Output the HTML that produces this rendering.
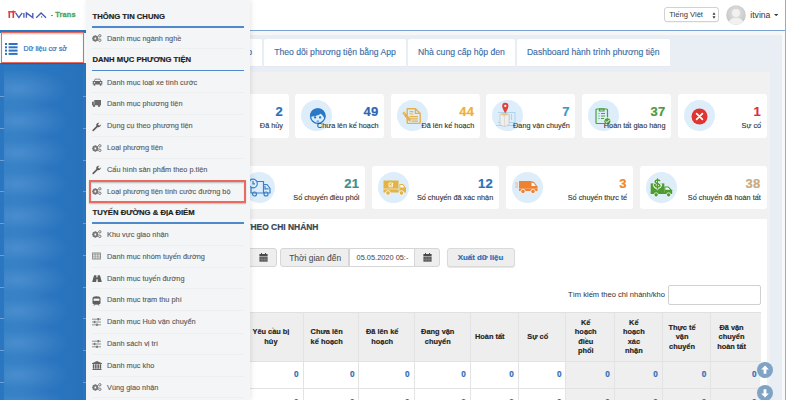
<!DOCTYPE html>
<html><head><meta charset="utf-8"><style>
html,body{margin:0;padding:0;}
body{width:786px;height:400px;overflow:hidden;position:relative;background:#fff;font-family:"Liberation Sans", sans-serif;}
</style></head><body>
<div style="position:absolute;left:86px;top:0px;width:700px;height:30px;background:#fff;"></div><div style="position:absolute;left:86px;top:29.5px;width:699px;height:1px;background:#7aa3d4;"></div><div style="position:absolute;left:86px;top:30.5px;width:699px;height:5px;background:#f6f6f7;"></div><div style="position:absolute;left:86px;top:35px;width:696.4px;height:365px;background:#e9eef4;"></div><div style="position:absolute;left:782.4px;top:30.5px;width:2.6px;height:370px;background:#f7f8fa;"></div><div style="position:absolute;left:785px;top:0px;width:1px;height:400px;background:#a8a8a8;"></div><div style="position:absolute;left:664.4px;top:7.3px;width:54.3px;height:14.8px;background:#fff;border:1px solid #d2d2d2;border-radius:3px;box-sizing:border-box;box-shadow:0 0.5px 0.5px rgba(0,0,0,0.08);"></div><div style="position:absolute;top:10.24px;font-size:7.6px;line-height:9.12px;color:#404040;white-space:nowrap;left:669.20px;-webkit-text-stroke:0.03px currentColor;">Tiếng Việt</div><svg style="position:absolute;left:711.9px;top:11.5px" width="4" height="7" viewBox="0 0 4 7"><path d="M2 0.3 L3.5 2.8 H0.5Z M2 6.7 L3.5 4.2 H0.5Z" fill="#3a3a3a"/></svg><svg style="position:absolute;left:725.5px;top:5px" width="20" height="20" viewBox="0 0 20 20"><defs><radialGradient id="av" cx="50%" cy="40%" r="60%"><stop offset="0" stop-color="#e6e6e6"/><stop offset="1" stop-color="#c4c4c4"/></radialGradient><clipPath id="avc"><circle cx="10" cy="10" r="9.8"/></clipPath></defs><circle cx="10" cy="10" r="9.8" fill="url(#av)"/><g clip-path="url(#avc)" fill="#f1f1f1"><circle cx="10" cy="8" r="4"/><path d="M2.5 20 C2.5 14.8 5.5 12.8 10 12.8 C14.5 12.8 17.5 14.8 17.5 20Z"/></g></svg><div style="position:absolute;top:9.84px;font-size:8.6px;line-height:10.319999999999999px;color:#3a3a3a;white-space:nowrap;left:750.30px;-webkit-text-stroke:0.05px currentColor;">itvina</div><svg style="position:absolute;left:773.8px;top:13.9px" width="4.4" height="2.4" viewBox="0 0 4.4 2.4"><path d="M0 0H4.4L2.2 2.2Z" fill="#3a3a3a"/></svg><div style="position:absolute;left:100px;top:39.4px;width:162.2px;height:26.3px;background:#fff;border-radius:2px 2px 0 0;box-shadow:0 0.6px 0 #dde3ea;"></div><div style="position:absolute;top:47.21px;font-size:8.65px;line-height:10.38px;color:#3a6ca6;white-space:nowrap;-webkit-text-stroke:0.12px currentColor;right:533.90px;text-align:right;">Báo cáo</div><div style="position:absolute;left:263.8px;top:39.4px;width:142.39999999999998px;height:26.3px;background:#fff;border-radius:2px 2px 0 0;box-shadow:0 0.6px 0 #dde3ea;"></div><div style="position:absolute;top:47.21px;font-size:8.65px;line-height:10.38px;color:#3a6ca6;white-space:nowrap;-webkit-text-stroke:0.12px currentColor;left:235.00px;width:200px;text-align:center;">Theo dõi phương tiện bằng App</div><div style="position:absolute;left:408px;top:39.4px;width:107px;height:26.3px;background:#fff;border-radius:2px 2px 0 0;box-shadow:0 0.6px 0 #dde3ea;"></div><div style="position:absolute;top:47.21px;font-size:8.65px;line-height:10.38px;color:#3a6ca6;white-space:nowrap;-webkit-text-stroke:0.12px currentColor;left:361.50px;width:200px;text-align:center;">Nhà cung cấp hộp đen</div><div style="position:absolute;left:516.8px;top:39.4px;width:152.9000000000001px;height:26.3px;background:#fff;border-radius:2px 2px 0 0;box-shadow:0 0.6px 0 #dde3ea;"></div><div style="position:absolute;top:47.21px;font-size:8.65px;line-height:10.38px;color:#3a6ca6;white-space:nowrap;-webkit-text-stroke:0.12px currentColor;left:493.25px;width:200px;text-align:center;">Dashboard hành trình phương tiện</div><div style="position:absolute;left:100.5px;top:71.6px;width:669.8px;height:330px;background:#f1f1f1;"></div><div style="position:absolute;left:103.95px;top:94px;width:89px;height:43.5px;background:#fff;border-radius:3px;"></div><div style="position:absolute;left:109.95px;top:100.3px;width:31px;height:31px;background:#ddedfa;border-radius:50%;"></div><div style="position:absolute;left:199.57px;top:94px;width:89px;height:43.5px;background:#fff;border-radius:3px;"></div><div style="position:absolute;left:205.57px;top:100.3px;width:31px;height:31px;background:#ddedfa;border-radius:50%;"></div><div style="position:absolute;top:104.40px;font-size:13px;line-height:15.6px;color:#2a6fb5;white-space:nowrap;font-weight:bold;-webkit-text-stroke:0.2px currentColor;right:503.03px;text-align:right;letter-spacing:0.3px;">2</div><div style="position:absolute;top:121.52px;font-size:7.3px;line-height:8.76px;color:#333;white-space:nowrap;-webkit-text-stroke:0.12px currentColor;right:503.03px;text-align:right;">Đã hủy</div><div style="position:absolute;left:295.2px;top:94px;width:89px;height:43.5px;background:#fff;border-radius:3px;"></div><div style="position:absolute;left:301.2px;top:100.3px;width:31px;height:31px;background:#ddedfa;border-radius:50%;"></div><svg style="position:absolute;left:308.5px;top:107.8px" width="18" height="17" viewBox="0 0 18 17"><circle cx="8.8" cy="8.1" r="7.3" fill="none" stroke="#2b78c6" stroke-width="1.35"/><path d="M1.3 8.8 C1 3 4.8 0.6 8.8 0.6 C12.8 0.6 16.6 3 16.3 9.2 L15.2 10.4 C14.4 8.2 13 6.6 11.6 5.8 C10 7.2 6.5 8.2 2.6 8.6 Z" fill="#2b78c6"/><circle cx="6.1" cy="9.4" r="1.15" fill="#2b78c6"/><circle cx="11.1" cy="9.4" r="1.15" fill="#2b78c6"/><rect x="7.7" y="12.6" width="2.2" height="1" fill="#2b78c6"/></svg><div style="position:absolute;top:104.40px;font-size:13px;line-height:15.6px;color:#2c68ae;white-space:nowrap;font-weight:bold;-webkit-text-stroke:0.2px currentColor;right:407.40px;text-align:right;letter-spacing:0.3px;">49</div><div style="position:absolute;top:121.52px;font-size:7.3px;line-height:8.76px;color:#333;white-space:nowrap;-webkit-text-stroke:0.12px currentColor;right:407.40px;text-align:right;">Chưa lên kế hoạch</div><div style="position:absolute;left:390.82px;top:94px;width:89px;height:43.5px;background:#fff;border-radius:3px;"></div><div style="position:absolute;left:396.82px;top:100.3px;width:31px;height:31px;background:#ddedfa;border-radius:50%;"></div><svg style="position:absolute;left:401.32px;top:107.3px" width="22" height="18" viewBox="0 0 22 18"><g fill="none" stroke="#e3b050" stroke-width="1.4" stroke-linejoin="round"><path d="M6.2 1.8 H14.4 L19.2 6.4 V15.4 Q19.2 16.4 18.2 16.4 H7.2 Q6.2 16.4 6.2 15.4 Z"/><path d="M14.4 1.8 V6.4 H19.2"/></g><g stroke="#e3b050" stroke-width="1.1"><path d="M8.6 4.6 H12.2 M8.6 7 H12.2 M8.6 9.6 H17 M8.6 11.9 H17 M10.5 14.1 H17"/></g><path d="M1.3 6.2 L3.2 4.6 L9.2 11.6 L9.8 14.8 L7 13.4 Z" fill="#e3b050"/><path d="M2.6 7.6 L4.2 6.1" stroke="#fff" stroke-width="0.5"/></svg><div style="position:absolute;top:104.40px;font-size:13px;line-height:15.6px;color:#f0b12e;white-space:nowrap;font-weight:bold;-webkit-text-stroke:0.2px currentColor;right:311.78px;text-align:right;letter-spacing:0.3px;">44</div><div style="position:absolute;top:121.52px;font-size:7.3px;line-height:8.76px;color:#333;white-space:nowrap;-webkit-text-stroke:0.12px currentColor;right:311.78px;text-align:right;">Đã lên kế hoạch</div><div style="position:absolute;left:486.45px;top:94px;width:89px;height:43.5px;background:#fff;border-radius:3px;"></div><div style="position:absolute;left:492.45px;top:100.3px;width:31px;height:31px;background:#ddedfa;border-radius:50%;"></div><svg style="position:absolute;left:494.45px;top:101.3px" width="26" height="28" viewBox="0 0 26 28"><g fill="none" stroke="#a9d3ea" stroke-width="0.9"><path d="M4 11.5 H21 V21.5 H4"/><path d="M15 13 V19 M17.5 13 V19"/><path d="M2 24.5 H22"/></g><path d="M6 13.5 L10.5 12 L15 13.5 V24 L10.5 25.5 L6 24Z" fill="#eeeeee" stroke="#bdbdbd" stroke-width="0.6"/><path d="M6 13.5 L10.5 12 L15 13.5 L10.5 15Z" fill="#e6c88a"/><path d="M10.5 15 V25.5" stroke="#c8c8c8" stroke-width="0.5"/><path d="M11.3 12.2 C8.6 7.6 8.2 6.2 8.2 4.9 A3.1 3.1 0 0 1 14.4 4.9 C14.4 6.2 14 7.6 11.3 12.2Z" fill="#e2403a"/><circle cx="11.3" cy="4.9" r="1.1" fill="#fff"/></svg><div style="position:absolute;top:104.40px;font-size:13px;line-height:15.6px;color:#3d98c6;white-space:nowrap;font-weight:bold;-webkit-text-stroke:0.2px currentColor;right:216.15px;text-align:right;letter-spacing:0.3px;">7</div><div style="position:absolute;top:121.52px;font-size:7.3px;line-height:8.76px;color:#333;white-space:nowrap;-webkit-text-stroke:0.12px currentColor;right:216.15px;text-align:right;">Đang vận chuyển</div><div style="position:absolute;left:582.08px;top:94px;width:89px;height:43.5px;background:#fff;border-radius:3px;"></div><div style="position:absolute;left:588.08px;top:100.3px;width:31px;height:31px;background:#ddedfa;border-radius:50%;"></div><svg style="position:absolute;left:595.08px;top:106.8px" width="18" height="18" viewBox="0 0 18 18"><g fill="none" stroke="#4aa23e" stroke-width="1.2"><rect x="1" y="2" width="11.5" height="14.5" rx="1"/><path d="M4.5 4 V1.8 H9 V4Z"/><path d="M3.5 6.5 H4.5 M6 6.5 H10 M3.5 9 H4.5 M6 9 H10 M3.5 11.5 H4.5 M6 11.5 H9"/></g><circle cx="12.4" cy="14.3" r="3.6" fill="#4aa23e" stroke="#fff" stroke-width="0.8"/><path d="M10.6 14.3 L12 15.6 L14.3 13" fill="none" stroke="#fff" stroke-width="1"/></svg><div style="position:absolute;top:104.40px;font-size:13px;line-height:15.6px;color:#4c9a3c;white-space:nowrap;font-weight:bold;-webkit-text-stroke:0.2px currentColor;right:120.52px;text-align:right;letter-spacing:0.3px;">37</div><div style="position:absolute;top:121.52px;font-size:7.3px;line-height:8.76px;color:#333;white-space:nowrap;-webkit-text-stroke:0.12px currentColor;right:120.52px;text-align:right;">Hoàn tất giao hàng</div><div style="position:absolute;left:677.7px;top:94px;width:89px;height:43.5px;background:#fff;border-radius:3px;"></div><div style="position:absolute;left:683.7px;top:100.3px;width:31px;height:31px;background:#ddedfa;border-radius:50%;"></div><svg style="position:absolute;left:691.2px;top:108.0px" width="17" height="17" viewBox="0 0 17 17"><circle cx="8.5" cy="8.5" r="8" fill="#e1342f"/><path d="M5.6 5.6 L11.4 11.4 M11.4 5.6 L5.6 11.4" stroke="#fff" stroke-width="1.7" stroke-linecap="round"/></svg><div style="position:absolute;top:104.40px;font-size:13px;line-height:15.6px;color:#d8323c;white-space:nowrap;font-weight:bold;-webkit-text-stroke:0.2px currentColor;right:24.90px;text-align:right;letter-spacing:0.3px;">1</div><div style="position:absolute;top:121.52px;font-size:7.3px;line-height:8.76px;color:#333;white-space:nowrap;-webkit-text-stroke:0.12px currentColor;right:24.90px;text-align:right;">Sự cố</div><div style="position:absolute;left:104.5px;top:166px;width:127.0px;height:42.5px;background:#fff;border-radius:3px;"></div><div style="position:absolute;left:110.5px;top:171.8px;width:31px;height:31px;background:#ddedfa;border-radius:50%;"></div><div style="position:absolute;left:238.3px;top:166px;width:127.0px;height:42.5px;background:#fff;border-radius:3px;"></div><div style="position:absolute;left:244.3px;top:171.8px;width:31px;height:31px;background:#ddedfa;border-radius:50%;"></div><svg style="position:absolute;left:247.8px;top:177.8px" width="24" height="20" viewBox="0 0 24 20"><g fill="none" stroke="#3a82c8" stroke-width="1.2"><circle cx="5" cy="5.5" r="4.3"/><path d="M5 3 V5.8 H7"/><path d="M9 3.5 H15.5 V15 H3 V9.8"/><path d="M15.5 6.5 H19 L22 10.5 V15 H15.5"/><path d="M17 7.8 V10.8 H20.5"/><circle cx="6.5" cy="16" r="2"/><circle cx="18" cy="16" r="2"/></g></svg><div style="position:absolute;top:175.80px;font-size:13px;line-height:15.6px;color:#3c8e88;white-space:nowrap;font-weight:bold;-webkit-text-stroke:0.2px currentColor;right:426.80px;text-align:right;letter-spacing:0.3px;">21</div><div style="position:absolute;top:193.92px;font-size:7.3px;line-height:8.76px;color:#333;white-space:nowrap;-webkit-text-stroke:0.12px currentColor;right:426.60px;text-align:right;">Số chuyến điều phối</div><div style="position:absolute;left:372.1px;top:166px;width:127.0px;height:42.5px;background:#fff;border-radius:3px;"></div><div style="position:absolute;left:378.1px;top:171.8px;width:31px;height:31px;background:#ddedfa;border-radius:50%;"></div><svg style="position:absolute;left:382.6px;top:180.3px" width="24" height="16" viewBox="0 0 24 16"><path d="M0.5 0.5 H15.5 V12 H0.5Z" fill="#e2b345"/><path d="M16.5 4 H20 L23 8 V12 H16.5Z" fill="#e2b345"/><path d="M17.3 5 H19.5 L21.3 7.6 H17.3Z" fill="#fff"/><rect x="0.5" y="11.5" width="22.5" height="1" fill="#e2b345"/><circle cx="5" cy="13" r="2.3" fill="#e2b345" stroke="#fff" stroke-width="0.8"/><circle cx="18.5" cy="13" r="2.3" fill="#e2b345" stroke="#fff" stroke-width="0.8"/><path d="M6 3 H9.5 V6.8 H6Z" fill="none" stroke="#fff" stroke-width="0.8"/><path d="M6.8 4.8 L7.8 5.8 L10 3" fill="none" stroke="#fff" stroke-width="0.8"/><path d="M0.5 9 H15.5" stroke="#fff" stroke-width="0.6"/></svg><div style="position:absolute;top:175.80px;font-size:13px;line-height:15.6px;color:#2a72b8;white-space:nowrap;font-weight:bold;-webkit-text-stroke:0.2px currentColor;right:293.00px;text-align:right;letter-spacing:0.3px;">12</div><div style="position:absolute;top:193.92px;font-size:7.3px;line-height:8.76px;color:#333;white-space:nowrap;-webkit-text-stroke:0.12px currentColor;right:292.80px;text-align:right;">Số chuyến đã xác nhận</div><div style="position:absolute;left:505.9px;top:166px;width:127.0px;height:42.5px;background:#fff;border-radius:3px;"></div><div style="position:absolute;left:511.9px;top:171.8px;width:31px;height:31px;background:#ddedfa;border-radius:50%;"></div><svg style="position:absolute;left:514.9px;top:180.3px" width="24" height="15" viewBox="0 0 24 15"><path d="M4 1 H15.5 L19 2 L22.5 6.5 V11 H4Z" fill="#ef8232"/><path d="M16.5 2.8 L18.5 3 L20.8 6 H16.5Z" fill="#fff"/><circle cx="8" cy="11.5" r="2.2" fill="#ef8232" stroke="#fff" stroke-width="0.8"/><circle cx="18" cy="11.5" r="2.2" fill="#ef8232" stroke="#fff" stroke-width="0.8"/><path d="M0 3 H3 M0.5 5 H3 M0 7 H3" stroke="#f3a66a" stroke-width="0.8"/><path d="M4 8.5 H22.5" stroke="#f6b584" stroke-width="0.5"/></svg><div style="position:absolute;top:175.80px;font-size:13px;line-height:15.6px;color:#f0862e;white-space:nowrap;font-weight:bold;-webkit-text-stroke:0.2px currentColor;right:159.20px;text-align:right;letter-spacing:0.3px;">3</div><div style="position:absolute;top:193.92px;font-size:7.3px;line-height:8.76px;color:#333;white-space:nowrap;-webkit-text-stroke:0.12px currentColor;right:159.00px;text-align:right;">Số chuyến thực tế</div><div style="position:absolute;left:639.7px;top:166px;width:127.0px;height:42.5px;background:#fff;border-radius:3px;"></div><div style="position:absolute;left:645.7px;top:171.8px;width:31px;height:31px;background:#ddedfa;border-radius:50%;"></div><svg style="position:absolute;left:649.9px;top:178.3px" width="24" height="20" viewBox="0 0 24 20"><rect x="0.7" y="5.4" width="13.6" height="9.8" fill="#4d9c2f"/><path d="M14.3 8.4 H18.5 L22.1 12.2 V15.8 H14.3Z" fill="#4d9c2f"/><path d="M15.4 9.4 H18 L20.2 11.8 H15.4Z" fill="#fff"/><rect x="0.7" y="14.6" width="21.4" height="1.4" fill="#4d9c2f"/><circle cx="6.1" cy="16.8" r="2.1" fill="#4d9c2f" stroke="#fff" stroke-width="0.7"/><circle cx="18.6" cy="16.8" r="2.1" fill="#4d9c2f" stroke="#fff" stroke-width="0.7"/><path d="M3.4 5.4 V8 L7.5 11.8 L11.6 8 V5.4" fill="none" stroke="#fff" stroke-width="0.8"/><g fill="none" stroke="#fff"><path d="M9.9 3.2 C9.9 1.6 5.1 1.6 5.1 3.7 C5.1 5.7 10 5.3 10 7.4 C10 9.4 5.1 9.4 5 7.8" stroke-width="3"/></g><g fill="none" stroke="#4d9c2f"><path d="M9.9 3.2 C9.9 1.6 5.1 1.6 5.1 3.7 C5.1 5.7 10 5.3 10 7.4 C10 9.4 5.1 9.4 5 7.8" stroke-width="1.5"/><path d="M7.5 0.3 V10.6" stroke-width="1.2"/></g></svg><div style="position:absolute;top:175.80px;font-size:13px;line-height:15.6px;color:#c9aa7c;white-space:nowrap;font-weight:bold;-webkit-text-stroke:0.2px currentColor;right:25.40px;text-align:right;letter-spacing:0.3px;">38</div><div style="position:absolute;top:193.92px;font-size:7.3px;line-height:8.76px;color:#333;white-space:nowrap;-webkit-text-stroke:0.12px currentColor;right:25.20px;text-align:right;">Số chuyến đã hoàn tất</div><div style="position:absolute;left:100.5px;top:219px;width:666.4px;height:190px;background:#fff;"></div><div style="position:absolute;top:222.23px;font-size:8.45px;line-height:10.139999999999999px;color:#3a4553;white-space:nowrap;font-weight:bold;-webkit-text-stroke:0.2px currentColor;right:467.60px;text-align:right;">THỐNG KÊ THEO CHI NHÁNH</div><div style="position:absolute;left:230px;top:248.3px;width:46.5px;height:19.2px;background:#eeeeee;border:1px solid #d6d6d6;border-radius:0 3px 3px 0;box-sizing:border-box;"></div><svg style="position:absolute;left:259px;top:253.3px" width="9" height="9" viewBox="0 0 9 9"><rect x="0.4" y="1" width="8.2" height="2.4" fill="#4a4a4a"/><rect x="0.4" y="3.9" width="8.2" height="4.8" fill="#5a5a5a"/><path d="M0.4 6.3 H8.6 M3.1 3.9 V8.7 M5.9 3.9 V8.7" stroke="#9a9a9a" stroke-width="0.45"/><rect x="2" y="0" width="1" height="1.6" fill="#4a4a4a"/><rect x="6" y="0" width="1" height="1.6" fill="#4a4a4a"/></svg><div style="position:absolute;left:280.4px;top:248.3px;width:68.5px;height:19.2px;background:#eeeeee;border:1px solid #d6d6d6;border-radius:3px 0 0 3px;box-sizing:border-box;"></div><div style="position:absolute;top:252.93px;font-size:8.45px;line-height:10.139999999999999px;color:#4a4a4a;white-space:nowrap;left:289.20px;-webkit-text-stroke:0.05px currentColor;">Thời gian đến</div><div style="position:absolute;left:348.6px;top:248.3px;width:66px;height:19.2px;background:#fff;border:1px solid #d6d6d6;box-sizing:border-box;"></div><div style="position:absolute;top:253.56px;font-size:7.4px;line-height:8.88px;color:#4a4a4a;white-space:nowrap;left:356.60px;-webkit-text-stroke:0.05px currentColor;">05.05.2020 05:-</div><div style="position:absolute;left:414.4px;top:248.3px;width:25.2px;height:19.2px;background:#eeeeee;border:1px solid #d6d6d6;border-radius:0 3px 3px 0;box-sizing:border-box;"></div><svg style="position:absolute;left:422.7px;top:253.3px" width="9" height="9" viewBox="0 0 9 9"><rect x="0.4" y="1" width="8.2" height="2.4" fill="#4a4a4a"/><rect x="0.4" y="3.9" width="8.2" height="4.8" fill="#5a5a5a"/><path d="M0.4 6.3 H8.6 M3.1 3.9 V8.7 M5.9 3.9 V8.7" stroke="#9a9a9a" stroke-width="0.45"/><rect x="2" y="0" width="1" height="1.6" fill="#4a4a4a"/><rect x="6" y="0" width="1" height="1.6" fill="#4a4a4a"/></svg><div style="position:absolute;left:446.5px;top:248px;width:68px;height:19.2px;background:#eeeeee;border:1px solid #dadada;border-radius:3px;box-sizing:border-box;box-shadow:0 1px 1px rgba(0,0,0,0.1);"></div><div style="position:absolute;top:253.06px;font-size:7.9px;line-height:9.48px;color:#2f6fb8;white-space:nowrap;font-weight:bold;-webkit-text-stroke:0.2px currentColor;left:380.50px;width:200px;text-align:center;">Xuất dữ liệu</div><div style="position:absolute;top:290.07px;font-size:7.55px;line-height:9.059999999999999px;color:#333;white-space:nowrap;right:121.00px;text-align:right;-webkit-text-stroke:0.03px currentColor;">Tìm kiếm theo chi nhánh/kho</div><div style="position:absolute;left:668px;top:285.1px;width:92.6px;height:20.2px;background:#fff;border:1px solid #d0d0d0;border-radius:2px;box-sizing:border-box;"></div><div style="position:absolute;left:100.5px;top:312.1px;width:660px;height:48.7px;background:#eeeeee;"></div><div style="position:absolute;left:100.5px;top:312.1px;width:660px;height:0.8px;background:#e0e0e0;"></div><div style="position:absolute;left:100.5px;top:360.8px;width:660px;height:0.8px;background:#e2e2e2;"></div><div style="position:absolute;left:565.4px;top:361.6px;width:195.1px;height:40px;background:#efefef;"></div><div style="position:absolute;left:100.5px;top:388.3px;width:660px;height:0.8px;background:#e2e2e2;"></div><div style="position:absolute;left:302.5px;top:312.1px;width:0.9px;height:90px;background:#e3e3e3;"></div><div style="position:absolute;left:358.4px;top:312.1px;width:0.9px;height:90px;background:#e3e3e3;"></div><div style="position:absolute;left:413.5px;top:312.1px;width:0.9px;height:90px;background:#e3e3e3;"></div><div style="position:absolute;left:469.6px;top:312.1px;width:0.9px;height:90px;background:#e3e3e3;"></div><div style="position:absolute;left:517.6px;top:312.1px;width:0.9px;height:90px;background:#e3e3e3;"></div><div style="position:absolute;left:565.4px;top:312.1px;width:0.9px;height:90px;background:#e3e3e3;"></div><div style="position:absolute;left:613.7px;top:312.1px;width:0.9px;height:90px;background:#e3e3e3;"></div><div style="position:absolute;left:661.6px;top:312.1px;width:0.9px;height:90px;background:#e3e3e3;"></div><div style="position:absolute;left:710.1px;top:312.1px;width:0.9px;height:90px;background:#e3e3e3;"></div><div style="position:absolute;top:328.46px;font-size:7.4px;line-height:8.88px;color:#222;white-space:nowrap;font-weight:bold;left:170.95px;width:200px;text-align:center;-webkit-text-stroke:0.15px currentColor;">Yêu cầu bị</div><div style="position:absolute;top:337.86px;font-size:7.4px;line-height:8.88px;color:#222;white-space:nowrap;font-weight:bold;left:170.95px;width:200px;text-align:center;-webkit-text-stroke:0.15px currentColor;">hủy</div><div style="position:absolute;top:369.68px;font-size:8.2px;line-height:9.839999999999998px;color:#2f6fb8;white-space:nowrap;font-weight:bold;-webkit-text-stroke:0.2px currentColor;right:487.40px;text-align:right;">0</div><div style="position:absolute;top:397.88px;font-size:8.2px;line-height:9.839999999999998px;color:#2f6fb8;white-space:nowrap;font-weight:bold;-webkit-text-stroke:0.2px currentColor;right:487.40px;text-align:right;">0</div><div style="position:absolute;top:328.46px;font-size:7.4px;line-height:8.88px;color:#222;white-space:nowrap;font-weight:bold;left:226.65px;width:200px;text-align:center;-webkit-text-stroke:0.15px currentColor;">Chưa lên</div><div style="position:absolute;top:337.86px;font-size:7.4px;line-height:8.88px;color:#222;white-space:nowrap;font-weight:bold;left:226.65px;width:200px;text-align:center;-webkit-text-stroke:0.15px currentColor;">kế hoạch</div><div style="position:absolute;top:369.68px;font-size:8.2px;line-height:9.839999999999998px;color:#2f6fb8;white-space:nowrap;font-weight:bold;-webkit-text-stroke:0.2px currentColor;right:431.50px;text-align:right;">0</div><div style="position:absolute;top:397.88px;font-size:8.2px;line-height:9.839999999999998px;color:#2f6fb8;white-space:nowrap;font-weight:bold;-webkit-text-stroke:0.2px currentColor;right:431.50px;text-align:right;">0</div><div style="position:absolute;top:328.46px;font-size:7.4px;line-height:8.88px;color:#222;white-space:nowrap;font-weight:bold;left:282.15px;width:200px;text-align:center;-webkit-text-stroke:0.15px currentColor;">Đã lên kế</div><div style="position:absolute;top:337.86px;font-size:7.4px;line-height:8.88px;color:#222;white-space:nowrap;font-weight:bold;left:282.15px;width:200px;text-align:center;-webkit-text-stroke:0.15px currentColor;">hoạch</div><div style="position:absolute;top:369.68px;font-size:8.2px;line-height:9.839999999999998px;color:#2f6fb8;white-space:nowrap;font-weight:bold;-webkit-text-stroke:0.2px currentColor;right:376.40px;text-align:right;">0</div><div style="position:absolute;top:397.88px;font-size:8.2px;line-height:9.839999999999998px;color:#2f6fb8;white-space:nowrap;font-weight:bold;-webkit-text-stroke:0.2px currentColor;right:376.40px;text-align:right;">0</div><div style="position:absolute;top:328.46px;font-size:7.4px;line-height:8.88px;color:#222;white-space:nowrap;font-weight:bold;left:337.75px;width:200px;text-align:center;-webkit-text-stroke:0.15px currentColor;">Đang vận</div><div style="position:absolute;top:337.86px;font-size:7.4px;line-height:8.88px;color:#222;white-space:nowrap;font-weight:bold;left:337.75px;width:200px;text-align:center;-webkit-text-stroke:0.15px currentColor;">chuyển</div><div style="position:absolute;top:369.68px;font-size:8.2px;line-height:9.839999999999998px;color:#2f6fb8;white-space:nowrap;font-weight:bold;-webkit-text-stroke:0.2px currentColor;right:320.30px;text-align:right;">0</div><div style="position:absolute;top:397.88px;font-size:8.2px;line-height:9.839999999999998px;color:#2f6fb8;white-space:nowrap;font-weight:bold;-webkit-text-stroke:0.2px currentColor;right:320.30px;text-align:right;">0</div><div style="position:absolute;top:333.16px;font-size:7.4px;line-height:8.88px;color:#222;white-space:nowrap;font-weight:bold;left:389.80px;width:200px;text-align:center;-webkit-text-stroke:0.15px currentColor;">Hoàn tất</div><div style="position:absolute;top:369.68px;font-size:8.2px;line-height:9.839999999999998px;color:#2f6fb8;white-space:nowrap;font-weight:bold;-webkit-text-stroke:0.2px currentColor;right:272.30px;text-align:right;">0</div><div style="position:absolute;top:397.88px;font-size:8.2px;line-height:9.839999999999998px;color:#2f6fb8;white-space:nowrap;font-weight:bold;-webkit-text-stroke:0.2px currentColor;right:272.30px;text-align:right;">0</div><div style="position:absolute;top:333.16px;font-size:7.4px;line-height:8.88px;color:#222;white-space:nowrap;font-weight:bold;left:437.70px;width:200px;text-align:center;-webkit-text-stroke:0.15px currentColor;">Sự cố</div><div style="position:absolute;top:369.68px;font-size:8.2px;line-height:9.839999999999998px;color:#2f6fb8;white-space:nowrap;font-weight:bold;-webkit-text-stroke:0.2px currentColor;right:224.50px;text-align:right;">0</div><div style="position:absolute;top:397.88px;font-size:8.2px;line-height:9.839999999999998px;color:#2f6fb8;white-space:nowrap;font-weight:bold;-webkit-text-stroke:0.2px currentColor;right:224.50px;text-align:right;">0</div><div style="position:absolute;top:319.06px;font-size:7.4px;line-height:8.88px;color:#222;white-space:nowrap;font-weight:bold;left:485.75px;width:200px;text-align:center;-webkit-text-stroke:0.15px currentColor;">Kế</div><div style="position:absolute;top:328.46px;font-size:7.4px;line-height:8.88px;color:#222;white-space:nowrap;font-weight:bold;left:485.75px;width:200px;text-align:center;-webkit-text-stroke:0.15px currentColor;">hoạch</div><div style="position:absolute;top:337.86px;font-size:7.4px;line-height:8.88px;color:#222;white-space:nowrap;font-weight:bold;left:485.75px;width:200px;text-align:center;-webkit-text-stroke:0.15px currentColor;">điều</div><div style="position:absolute;top:347.26px;font-size:7.4px;line-height:8.88px;color:#222;white-space:nowrap;font-weight:bold;left:485.75px;width:200px;text-align:center;-webkit-text-stroke:0.15px currentColor;">phối</div><div style="position:absolute;top:369.68px;font-size:8.2px;line-height:9.839999999999998px;color:#2f6fb8;white-space:nowrap;font-weight:bold;-webkit-text-stroke:0.2px currentColor;right:176.20px;text-align:right;">0</div><div style="position:absolute;top:397.88px;font-size:8.2px;line-height:9.839999999999998px;color:#2f6fb8;white-space:nowrap;font-weight:bold;-webkit-text-stroke:0.2px currentColor;right:176.20px;text-align:right;">0</div><div style="position:absolute;top:319.06px;font-size:7.4px;line-height:8.88px;color:#222;white-space:nowrap;font-weight:bold;left:533.85px;width:200px;text-align:center;-webkit-text-stroke:0.15px currentColor;">Kế</div><div style="position:absolute;top:328.46px;font-size:7.4px;line-height:8.88px;color:#222;white-space:nowrap;font-weight:bold;left:533.85px;width:200px;text-align:center;-webkit-text-stroke:0.15px currentColor;">hoạch</div><div style="position:absolute;top:337.86px;font-size:7.4px;line-height:8.88px;color:#222;white-space:nowrap;font-weight:bold;left:533.85px;width:200px;text-align:center;-webkit-text-stroke:0.15px currentColor;">xác</div><div style="position:absolute;top:347.26px;font-size:7.4px;line-height:8.88px;color:#222;white-space:nowrap;font-weight:bold;left:533.85px;width:200px;text-align:center;-webkit-text-stroke:0.15px currentColor;">nhận</div><div style="position:absolute;top:369.68px;font-size:8.2px;line-height:9.839999999999998px;color:#2f6fb8;white-space:nowrap;font-weight:bold;-webkit-text-stroke:0.2px currentColor;right:128.30px;text-align:right;">0</div><div style="position:absolute;top:397.88px;font-size:8.2px;line-height:9.839999999999998px;color:#2f6fb8;white-space:nowrap;font-weight:bold;-webkit-text-stroke:0.2px currentColor;right:128.30px;text-align:right;">0</div><div style="position:absolute;top:323.76px;font-size:7.4px;line-height:8.88px;color:#222;white-space:nowrap;font-weight:bold;left:582.05px;width:200px;text-align:center;-webkit-text-stroke:0.15px currentColor;">Thực tế</div><div style="position:absolute;top:333.16px;font-size:7.4px;line-height:8.88px;color:#222;white-space:nowrap;font-weight:bold;left:582.05px;width:200px;text-align:center;-webkit-text-stroke:0.15px currentColor;">vận</div><div style="position:absolute;top:342.56px;font-size:7.4px;line-height:8.88px;color:#222;white-space:nowrap;font-weight:bold;left:582.05px;width:200px;text-align:center;-webkit-text-stroke:0.15px currentColor;">chuyển</div><div style="position:absolute;top:369.68px;font-size:8.2px;line-height:9.839999999999998px;color:#2f6fb8;white-space:nowrap;font-weight:bold;-webkit-text-stroke:0.2px currentColor;right:79.80px;text-align:right;">0</div><div style="position:absolute;top:397.88px;font-size:8.2px;line-height:9.839999999999998px;color:#2f6fb8;white-space:nowrap;font-weight:bold;-webkit-text-stroke:0.2px currentColor;right:79.80px;text-align:right;">0</div><div style="position:absolute;top:323.76px;font-size:7.4px;line-height:8.88px;color:#222;white-space:nowrap;font-weight:bold;left:631.50px;width:200px;text-align:center;-webkit-text-stroke:0.15px currentColor;">Đã vận</div><div style="position:absolute;top:333.16px;font-size:7.4px;line-height:8.88px;color:#222;white-space:nowrap;font-weight:bold;left:631.50px;width:200px;text-align:center;-webkit-text-stroke:0.15px currentColor;">chuyển</div><div style="position:absolute;top:342.56px;font-size:7.4px;line-height:8.88px;color:#222;white-space:nowrap;font-weight:bold;left:631.50px;width:200px;text-align:center;-webkit-text-stroke:0.15px currentColor;">hoàn tất</div><div style="position:absolute;top:369.68px;font-size:8.2px;line-height:9.839999999999998px;color:#2f6fb8;white-space:nowrap;font-weight:bold;-webkit-text-stroke:0.2px currentColor;right:29.40px;text-align:right;">0</div><div style="position:absolute;top:397.88px;font-size:8.2px;line-height:9.839999999999998px;color:#2f6fb8;white-space:nowrap;font-weight:bold;-webkit-text-stroke:0.2px currentColor;right:29.40px;text-align:right;">0</div><svg style="position:absolute;left:755.6px;top:360.6px" width="18" height="18" viewBox="-9 -9 18 18"><circle r="8" fill="#7ea3c5"/><path d="M0 -4.6 L3.9 -0.4 H1.4 V3.8 H-1.4 V-0.4 H-3.9Z" fill="#fff"/></svg><svg style="position:absolute;left:755.6px;top:383.7px" width="18" height="18" viewBox="-9 -9 18 18"><circle r="8" fill="#7ea3c5"/><path d="M0 4.6 L3.9 0.4 H1.4 V-3.8 H-1.4 V0.4 H-3.9Z" fill="#fff"/></svg><div style="position:absolute;left:0px;top:0px;width:86px;height:30px;background:#fff;"></div><div style="position:absolute;left:0px;top:30px;width:86px;height:370px;background:#2a76c0;"></div><div style="position:absolute;left:4px;top:65px;width:79px;height:335px;overflow:hidden;background:linear-gradient(90deg,#2d7ac2,#2a75bf 60%,#2872bc);"><div style="position:absolute;left:-36px;top:4.00px;width:100px;height:40px;background:radial-gradient(ellipse 50% 50% at 50% 50%, rgba(125,178,228,0.36), rgba(125,178,228,0) 100%);"></div><div style="position:absolute;left:-36px;top:35.75px;width:100px;height:40px;background:radial-gradient(ellipse 50% 50% at 50% 50%, rgba(125,178,228,0.36), rgba(125,178,228,0) 100%);"></div><div style="position:absolute;left:-36px;top:67.50px;width:100px;height:40px;background:radial-gradient(ellipse 50% 50% at 50% 50%, rgba(125,178,228,0.36), rgba(125,178,228,0) 100%);"></div><div style="position:absolute;left:-36px;top:99.25px;width:100px;height:40px;background:radial-gradient(ellipse 50% 50% at 50% 50%, rgba(125,178,228,0.36), rgba(125,178,228,0) 100%);"></div><div style="position:absolute;left:-36px;top:131.00px;width:100px;height:40px;background:radial-gradient(ellipse 50% 50% at 50% 50%, rgba(125,178,228,0.36), rgba(125,178,228,0) 100%);"></div><div style="position:absolute;left:-36px;top:162.75px;width:100px;height:40px;background:radial-gradient(ellipse 50% 50% at 50% 50%, rgba(125,178,228,0.36), rgba(125,178,228,0) 100%);"></div><div style="position:absolute;left:-36px;top:194.50px;width:100px;height:40px;background:radial-gradient(ellipse 50% 50% at 50% 50%, rgba(125,178,228,0.36), rgba(125,178,228,0) 100%);"></div><div style="position:absolute;left:-36px;top:226.25px;width:100px;height:40px;background:radial-gradient(ellipse 50% 50% at 50% 50%, rgba(125,178,228,0.36), rgba(125,178,228,0) 100%);"></div><div style="position:absolute;left:-36px;top:258.00px;width:100px;height:40px;background:radial-gradient(ellipse 50% 50% at 50% 50%, rgba(125,178,228,0.36), rgba(125,178,228,0) 100%);"></div><div style="position:absolute;left:-36px;top:289.75px;width:100px;height:40px;background:radial-gradient(ellipse 50% 50% at 50% 50%, rgba(125,178,228,0.36), rgba(125,178,228,0) 100%);"></div><div style="position:absolute;left:-36px;top:321.50px;width:100px;height:40px;background:radial-gradient(ellipse 50% 50% at 50% 50%, rgba(125,178,228,0.36), rgba(125,178,228,0) 100%);"></div></div><div style="position:absolute;left:0px;top:96.0px;width:4px;height:0.8px;background:#6ba0d6;"></div><div style="position:absolute;left:83px;top:96.0px;width:3px;height:0.8px;background:#6ba0d6;"></div><div style="position:absolute;left:0px;top:127.75px;width:4px;height:0.8px;background:#6ba0d6;"></div><div style="position:absolute;left:83px;top:127.75px;width:3px;height:0.8px;background:#6ba0d6;"></div><div style="position:absolute;left:0px;top:159.5px;width:4px;height:0.8px;background:#6ba0d6;"></div><div style="position:absolute;left:83px;top:159.5px;width:3px;height:0.8px;background:#6ba0d6;"></div><div style="position:absolute;left:0px;top:191.25px;width:4px;height:0.8px;background:#6ba0d6;"></div><div style="position:absolute;left:83px;top:191.25px;width:3px;height:0.8px;background:#6ba0d6;"></div><div style="position:absolute;left:0px;top:223.0px;width:4px;height:0.8px;background:#6ba0d6;"></div><div style="position:absolute;left:83px;top:223.0px;width:3px;height:0.8px;background:#6ba0d6;"></div><div style="position:absolute;left:0px;top:254.75px;width:4px;height:0.8px;background:#6ba0d6;"></div><div style="position:absolute;left:83px;top:254.75px;width:3px;height:0.8px;background:#6ba0d6;"></div><div style="position:absolute;left:0px;top:286.5px;width:4px;height:0.8px;background:#6ba0d6;"></div><div style="position:absolute;left:83px;top:286.5px;width:3px;height:0.8px;background:#6ba0d6;"></div><div style="position:absolute;left:0px;top:318.25px;width:4px;height:0.8px;background:#6ba0d6;"></div><div style="position:absolute;left:83px;top:318.25px;width:3px;height:0.8px;background:#6ba0d6;"></div><div style="position:absolute;left:0px;top:350.0px;width:4px;height:0.8px;background:#6ba0d6;"></div><div style="position:absolute;left:83px;top:350.0px;width:3px;height:0.8px;background:#6ba0d6;"></div><div style="position:absolute;left:0px;top:381.75px;width:4px;height:0.8px;background:#6ba0d6;"></div><div style="position:absolute;left:83px;top:381.75px;width:3px;height:0.8px;background:#6ba0d6;"></div><div style="position:absolute;left:0px;top:33px;width:86px;height:30px;background:#fff;"></div><div style="position:absolute;left:0.9px;top:32.2px;width:83.3px;height:30.6px;border:1.8px solid #e96a5e;box-sizing:border-box;box-shadow:0 1.2px 1.2px rgba(0,0,0,0.22), inset 0 1.2px 1.2px rgba(0,0,0,0.2);"></div><svg style="position:absolute;left:4.8px;top:43px" width="13" height="12" viewBox="0 0 13 12"><g fill="#2f73bf"><rect x="0" y="0" width="2" height="2"/><rect x="3.6" y="0" width="9" height="2"/><rect x="0" y="3.3" width="2" height="2"/><rect x="3.6" y="3.3" width="9" height="2"/><rect x="0" y="6.6" width="2" height="2"/><rect x="3.6" y="6.6" width="9" height="2"/><rect x="0" y="9.9" width="2" height="2"/><rect x="3.6" y="9.9" width="9" height="2"/></g></svg><div style="position:absolute;top:45.11px;font-size:7.15px;line-height:8.58px;color:#3576c0;white-space:nowrap;left:23.50px;-webkit-text-stroke:0.22px currentColor;">Dữ liệu cơ sở</div><svg style="position:absolute;left:0;top:0" width="50" height="22" viewBox="0 0 50 22"><g fill="#e5352e"><rect x="8.1" y="11.1" width="7.6" height="1.5"/><rect x="8.5" y="12.3" width="1.6" height="5.6"/><rect x="12.5" y="10.6" width="1.6" height="7.3"/></g><g fill="none" stroke="#4b5bb6" stroke-width="1.35" stroke-linejoin="miter"><path d="M15.6 12.9 L18.9 17.6 L22.2 12.9"/><path d="M23.9 12.9 V17.8"/><path d="M26.4 17.8 V12.9 L32.8 17.6 V12.9"/><path d="M36.2 17.8 L41.1 13 L46 17.8"/></g><circle cx="41.6" cy="16.9" r="0.7" fill="#4b5bb6"/></svg><div style="position:absolute;left:50.9px;top:14.8px;width:2px;height:1.1px;background:#8a8a8a;"></div><div style="position:absolute;top:11.16px;font-size:7.4px;line-height:8.88px;color:#4da65f;white-space:nowrap;font-weight:bold;left:55.30px;letter-spacing:0.15px;-webkit-text-stroke:0.3px currentColor;">Trans</div><div style="position:absolute;left:86px;top:0px;width:164px;height:400px;background:#f4f5f7;box-shadow:1px 0 5px rgba(0,0,0,0.1);"></div><div style="position:absolute;top:11.59px;font-size:7.68px;line-height:9.216px;color:#1e1e1e;white-space:nowrap;font-weight:bold;-webkit-text-stroke:0.2px currentColor;left:92.50px;">THÔNG TIN CHUNG</div><div style="position:absolute;left:92px;top:26.3px;width:151.6px;height:1.25px;background:#4d89cb;"></div><div style="position:absolute;top:55.29px;font-size:7.68px;line-height:9.216px;color:#1e1e1e;white-space:nowrap;font-weight:bold;-webkit-text-stroke:0.2px currentColor;left:92.50px;">DANH MỤC PHƯƠNG TIỆN</div><div style="position:absolute;left:92px;top:70.1px;width:151.6px;height:1.25px;background:#4d89cb;"></div><div style="position:absolute;top:207.69px;font-size:7.68px;line-height:9.216px;color:#1e1e1e;white-space:nowrap;font-weight:bold;-webkit-text-stroke:0.2px currentColor;left:92.50px;">TUYẾN ĐƯỜNG &amp; ĐỊA ĐIỂM</div><div style="position:absolute;left:92px;top:222.4px;width:151.6px;height:1.25px;background:#4d89cb;"></div><div style="position:absolute;left:92px;top:48.3px;width:151.6px;height:0.7px;background:#edeef0;"></div><div style="position:absolute;left:92px;top:92.4px;width:151.6px;height:0.7px;background:#edeef0;"></div><div style="position:absolute;left:92px;top:114.3px;width:151.6px;height:0.7px;background:#edeef0;"></div><div style="position:absolute;left:92px;top:136.2px;width:151.6px;height:0.7px;background:#edeef0;"></div><div style="position:absolute;left:92px;top:158.1px;width:151.6px;height:0.7px;background:#edeef0;"></div><div style="position:absolute;left:92px;top:180.0px;width:151.6px;height:0.7px;background:#edeef0;"></div><div style="position:absolute;left:92px;top:245.2px;width:151.6px;height:0.7px;background:#edeef0;"></div><div style="position:absolute;left:92px;top:266.7px;width:151.6px;height:0.7px;background:#edeef0;"></div><div style="position:absolute;left:92px;top:288.4px;width:151.6px;height:0.7px;background:#edeef0;"></div><div style="position:absolute;left:92px;top:310.4px;width:151.6px;height:0.7px;background:#edeef0;"></div><div style="position:absolute;left:92px;top:332.5px;width:151.6px;height:0.7px;background:#edeef0;"></div><div style="position:absolute;left:92px;top:354.3px;width:151.6px;height:0.7px;background:#edeef0;"></div><div style="position:absolute;left:92px;top:375.9px;width:151.6px;height:0.7px;background:#edeef0;"></div><div style="position:absolute;left:92px;top:397.3px;width:151.6px;height:0.7px;background:#edeef0;"></div><div style="position:absolute;top:35.09px;font-size:7.35px;line-height:8.819999999999999px;color:#5a5a5a;white-space:nowrap;left:107.00px;-webkit-text-stroke:0.12px currentColor;">Danh mục ngành nghề</div><svg style="position:absolute;left:92.3px;top:34.3px" width="10" height="8" viewBox="0 0 10 8"><g fill="none" stroke="#777"><circle cx="3.3" cy="4.5" r="2.1" stroke-width="1.6"/><circle cx="7.8" cy="1.8" r="1.2" stroke-width="1"/><circle cx="7.8" cy="6.3" r="1.2" stroke-width="1"/></g><g stroke="#777" stroke-width="0.9"><path d="M3.3 1.3 V7.7 M0.1 4.5 H6.5 M1 2.2 L5.6 6.8 M5.6 2.2 L1 6.8"/></g><circle cx="3.3" cy="4.5" r="0.9" fill="#f4f5f7"/></svg><div style="position:absolute;top:78.59px;font-size:7.35px;line-height:8.819999999999999px;color:#5a5a5a;white-space:nowrap;left:107.00px;-webkit-text-stroke:0.12px currentColor;">Danh mục loại xe tính cước</div><svg style="position:absolute;left:92.3px;top:77.8px" width="11" height="8" viewBox="0 0 11 8"><path d="M2 3 L3 0.8 H8 L9 3 H10.3 V6.5 H9.3 V7.8 H7.8 V6.5 H3.2 V7.8 H1.7 V6.5 H0.7 V3Z" fill="#6a6a6a"/><path d="M3.3 1.6 H7.7 L8.3 3 H2.7Z" fill="#f4f5f7"/><circle cx="2.4" cy="4.7" r="0.8" fill="#f4f5f7"/><circle cx="8.6" cy="4.7" r="0.8" fill="#f4f5f7"/></svg><div style="position:absolute;top:100.49px;font-size:7.35px;line-height:8.819999999999999px;color:#5a5a5a;white-space:nowrap;left:107.00px;-webkit-text-stroke:0.12px currentColor;">Danh mục phương tiện</div><svg style="position:absolute;left:92.3px;top:99.7px" width="9" height="7" viewBox="0 0 9 7"><path d="M2.3 0 H9 V5.3 H2.3Z M0 2 L1.8 1.3 V5.3 H0Z" fill="#6a6a6a"/><circle cx="2" cy="5.7" r="1.2" fill="#6a6a6a"/><circle cx="7" cy="5.7" r="1.2" fill="#6a6a6a"/></svg><div style="position:absolute;top:122.39px;font-size:7.35px;line-height:8.819999999999999px;color:#5a5a5a;white-space:nowrap;left:107.00px;-webkit-text-stroke:0.12px currentColor;">Dụng cụ theo phương tiện</div><svg style="position:absolute;left:92.3px;top:121.6px" width="9" height="10" viewBox="0 0 9 10"><path d="M1.2 8.4 L5 4.6" stroke="#5e5e5e" stroke-width="1.6" stroke-linecap="round"/><path d="M4.2 3.6 C4 1.6 5.5 0.4 7.4 0.8 L6 2.2 L6.5 3.3 L7.7 3.6 L8.9 2.3 C9.1 4.2 7.5 5.6 5.6 5.2Z" fill="#5e5e5e"/></svg><div style="position:absolute;top:144.29px;font-size:7.35px;line-height:8.819999999999999px;color:#5a5a5a;white-space:nowrap;left:107.00px;-webkit-text-stroke:0.12px currentColor;">Loại phương tiện</div><svg style="position:absolute;left:92.3px;top:143.5px" width="10" height="8" viewBox="0 0 10 8"><g fill="none" stroke="#777"><circle cx="3.3" cy="4.5" r="2.1" stroke-width="1.6"/><circle cx="7.8" cy="1.8" r="1.2" stroke-width="1"/><circle cx="7.8" cy="6.3" r="1.2" stroke-width="1"/></g><g stroke="#777" stroke-width="0.9"><path d="M3.3 1.3 V7.7 M0.1 4.5 H6.5 M1 2.2 L5.6 6.8 M5.6 2.2 L1 6.8"/></g><circle cx="3.3" cy="4.5" r="0.9" fill="#f4f5f7"/></svg><div style="position:absolute;top:166.19px;font-size:7.35px;line-height:8.819999999999999px;color:#5a5a5a;white-space:nowrap;left:107.00px;-webkit-text-stroke:0.12px currentColor;">Cấu hình sản phẩm theo p.tiện</div><svg style="position:absolute;left:92.3px;top:165.4px" width="9" height="10" viewBox="0 0 9 10"><path d="M1.2 8.4 L5 4.6" stroke="#5e5e5e" stroke-width="1.6" stroke-linecap="round"/><path d="M4.2 3.6 C4 1.6 5.5 0.4 7.4 0.8 L6 2.2 L6.5 3.3 L7.7 3.6 L8.9 2.3 C9.1 4.2 7.5 5.6 5.6 5.2Z" fill="#5e5e5e"/></svg><div style="position:absolute;top:187.99px;font-size:7.35px;line-height:8.819999999999999px;color:#5a5a5a;white-space:nowrap;left:107.00px;-webkit-text-stroke:0.12px currentColor;">Loại phương tiện tính cước đường bộ</div><svg style="position:absolute;left:92.3px;top:187.2px" width="10" height="8" viewBox="0 0 10 8"><g fill="none" stroke="#777"><circle cx="3.3" cy="4.5" r="2.1" stroke-width="1.6"/><circle cx="7.8" cy="1.8" r="1.2" stroke-width="1"/><circle cx="7.8" cy="6.3" r="1.2" stroke-width="1"/></g><g stroke="#777" stroke-width="0.9"><path d="M3.3 1.3 V7.7 M0.1 4.5 H6.5 M1 2.2 L5.6 6.8 M5.6 2.2 L1 6.8"/></g><circle cx="3.3" cy="4.5" r="0.9" fill="#f4f5f7"/></svg><div style="position:absolute;top:231.09px;font-size:7.35px;line-height:8.819999999999999px;color:#5a5a5a;white-space:nowrap;left:107.00px;-webkit-text-stroke:0.12px currentColor;">Khu vực giao nhận</div><svg style="position:absolute;left:92.3px;top:230.3px" width="10" height="8" viewBox="0 0 10 8"><g fill="none" stroke="#777"><circle cx="3.3" cy="4.5" r="2.1" stroke-width="1.6"/><circle cx="7.8" cy="1.8" r="1.2" stroke-width="1"/><circle cx="7.8" cy="6.3" r="1.2" stroke-width="1"/></g><g stroke="#777" stroke-width="0.9"><path d="M3.3 1.3 V7.7 M0.1 4.5 H6.5 M1 2.2 L5.6 6.8 M5.6 2.2 L1 6.8"/></g><circle cx="3.3" cy="4.5" r="0.9" fill="#f4f5f7"/></svg><div style="position:absolute;top:252.89px;font-size:7.35px;line-height:8.819999999999999px;color:#5a5a5a;white-space:nowrap;left:107.00px;-webkit-text-stroke:0.12px currentColor;">Danh mục nhóm tuyến đường</div><svg style="position:absolute;left:92.3px;top:252.1px" width="9" height="8" viewBox="0 0 9 8"><rect x="0.6" y="1" width="7.8" height="6" fill="none" stroke="#8a8a8a" stroke-width="1"/><path d="M0.6 2.8 H8.4 M3.2 1 V7 M5.8 1 V7 M0.6 4.9 H8.4" stroke="#8a8a8a" stroke-width="0.7"/></svg><div style="position:absolute;top:274.79px;font-size:7.35px;line-height:8.819999999999999px;color:#5a5a5a;white-space:nowrap;left:107.00px;-webkit-text-stroke:0.12px currentColor;">Danh mục tuyến đường</div><svg style="position:absolute;left:92.3px;top:274.0px" width="10" height="9" viewBox="0 0 10 9"><path d="M0.2 8 L1.6 2.8 L2.2 1.2 H4.3 L4.5 3.5 H5.5 L5.7 1.2 H7.8 L8.4 2.8 L9.8 8 H5.8 L5.6 5.2 H4.4 L4.2 8Z" fill="#5e5e5e"/></svg><div style="position:absolute;top:296.49px;font-size:7.35px;line-height:8.819999999999999px;color:#5a5a5a;white-space:nowrap;left:107.00px;-webkit-text-stroke:0.12px currentColor;">Danh mục trạm thu phí</div><svg style="position:absolute;left:92.3px;top:295.7px" width="9" height="10" viewBox="0 0 9 10"><path d="M0.5 2.5 Q0.5 0.3 4.5 0.3 Q8.5 0.3 8.5 2.5 V7 Q8.5 8.3 7 8.3 H2 Q0.5 8.3 0.5 7Z" fill="#5e5e5e"/><rect x="1.6" y="2.6" width="5.8" height="2.2" fill="#f4f5f7"/><path d="M2 9.6 L3 8 H6 L7 9.6" stroke="#5e5e5e" stroke-width="0.9" fill="none"/></svg><div style="position:absolute;top:318.29px;font-size:7.35px;line-height:8.819999999999999px;color:#5a5a5a;white-space:nowrap;left:107.00px;-webkit-text-stroke:0.12px currentColor;">Danh mục Hub vận chuyển</div><svg style="position:absolute;left:92.3px;top:317.5px" width="9" height="8" viewBox="0 0 9 8"><path d="M0 1.2 H9 M0 4 H9 M0 6.8 H9" stroke="#777" stroke-width="0.8"/><rect x="5.5" y="0" width="1.6" height="2.4" fill="#777"/><rect x="1.8" y="2.8" width="1.6" height="2.4" fill="#777"/><rect x="4.2" y="5.6" width="1.6" height="2.4" fill="#777"/></svg><div style="position:absolute;top:340.29px;font-size:7.35px;line-height:8.819999999999999px;color:#5a5a5a;white-space:nowrap;left:107.00px;-webkit-text-stroke:0.12px currentColor;">Danh sách vị trí</div><svg style="position:absolute;left:92.3px;top:339.5px" width="9" height="8" viewBox="0 0 9 8"><path d="M0 1.2 H9 M0 4 H9 M0 6.8 H9" stroke="#777" stroke-width="0.8"/><rect x="5.5" y="0" width="1.6" height="2.4" fill="#777"/><rect x="1.8" y="2.8" width="1.6" height="2.4" fill="#777"/><rect x="4.2" y="5.6" width="1.6" height="2.4" fill="#777"/></svg><div style="position:absolute;top:361.69px;font-size:7.35px;line-height:8.819999999999999px;color:#5a5a5a;white-space:nowrap;left:107.00px;-webkit-text-stroke:0.12px currentColor;">Danh mục kho</div><svg style="position:absolute;left:92.3px;top:360.9px" width="10" height="9" viewBox="0 0 10 9"><path d="M0 2.2 L5 0 L10 2.2 V3 H0Z M0.5 8 H9.5 V9 H0.5Z" fill="#666"/><path d="M1.6 3.3 V7.7 M3.85 3.3 V7.7 M6.15 3.3 V7.7 M8.4 3.3 V7.7" stroke="#5e5e5e" stroke-width="1.5"/></svg><div style="position:absolute;top:383.79px;font-size:7.35px;line-height:8.819999999999999px;color:#5a5a5a;white-space:nowrap;left:107.00px;-webkit-text-stroke:0.12px currentColor;">Vùng giao nhận</div><svg style="position:absolute;left:92.3px;top:383.0px" width="10" height="8" viewBox="0 0 10 8"><g fill="none" stroke="#777"><circle cx="3.3" cy="4.5" r="2.1" stroke-width="1.6"/><circle cx="7.8" cy="1.8" r="1.2" stroke-width="1"/><circle cx="7.8" cy="6.3" r="1.2" stroke-width="1"/></g><g stroke="#777" stroke-width="0.9"><path d="M3.3 1.3 V7.7 M0.1 4.5 H6.5 M1 2.2 L5.6 6.8 M5.6 2.2 L1 6.8"/></g><circle cx="3.3" cy="4.5" r="0.9" fill="#f4f5f7"/></svg><div style="position:absolute;left:88.5px;top:180.2px;width:157.2px;height:23px;border:2px solid #e96a5e;box-sizing:border-box;box-shadow:0 1.2px 1.2px rgba(0,0,0,0.22), inset 0 1.2px 1.2px rgba(0,0,0,0.2);"></div>
</body></html>
